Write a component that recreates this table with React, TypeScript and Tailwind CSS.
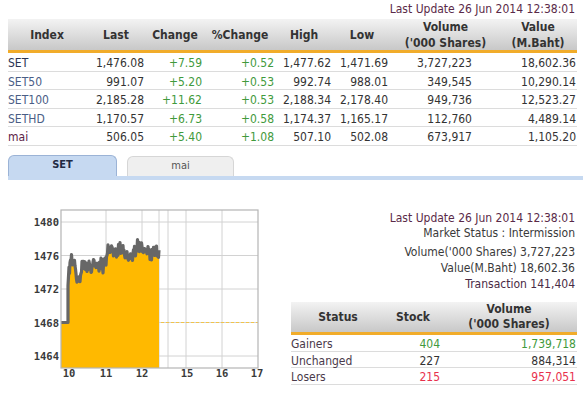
const indexRows = [
  { name: 'SET', tone: 'text-[#2b3352]', last: '1,476.08', chg: '+7.59', pct: '+0.52', high: '1,477.62', low: '1,471.69', vol: '3,727,223', val: '18,602.36' },
  { name: 'SET50', tone: 'text-[#4a5d86]', last: '991.07', chg: '+5.20', pct: '+0.53', high: '992.74', low: '988.01', vol: '349,545', val: '10,290.14' },
  { name: 'SET100', tone: 'text-[#4a5d86]', last: '2,185.28', chg: '+11.62', pct: '+0.53', high: '2,188.34', low: '2,178.40', vol: '949,736', val: '12,523.27' },
  { name: 'SETHD', tone: 'text-[#4a5d86]', last: '1,170.57', chg: '+6.73', pct: '+0.58', high: '1,174.37', low: '1,165.17', vol: '112,760', val: '4,489.14' },
  { name: 'mai', tone: 'text-[#5c2446]', last: '506.05', chg: '+5.40', pct: '+1.08', high: '507.10', low: '502.08', vol: '673,917', val: '1,105.20' },
];

const statusRows = [
  { name: 'Gainers', tone: 'text-[#3f9a3c]', stock: '404', vol: '1,739,718' },
  { name: 'Unchanged', tone: 'text-[#333333]', stock: '227', vol: '884,314' },
  { name: 'Losers', tone: 'text-[#e8304c]', stock: '215', vol: '957,051' },
];

// rough shape of the morning session, [x, index level]
const keys: [number, number][] = [
  [68, 1472.4], [69, 1474.6], [71, 1475.4], [74, 1475.1], [77, 1473.2], [78, 1472.9],
  [80, 1473.6], [82, 1474.6], [84, 1475.0], [86, 1474.2], [88, 1475.0], [91, 1474.5],
  [94, 1475.3], [97, 1474.4], [100, 1475.0], [103, 1474.8], [106, 1475.6], [108, 1476.5],
  [112, 1476.8], [116, 1476.3], [120, 1476.8], [124, 1476.5], [127, 1476.2], [130, 1475.5],
  [133, 1476.0], [136, 1476.8], [139, 1477.5], [142, 1476.8], [145, 1476.3], [148, 1476.8],
  [151, 1476.0], [154, 1476.6], [157, 1476.2], [159, 1476.4],
];

const yOf = (v: number) => 222 + (1480 - v) * 8.375;

function levelAt(x: number) {
  for (let i = 0; i < keys.length - 1; i++) {
    const [x0, v0] = keys[i];
    const [x1, v1] = keys[i + 1];
    if (x >= x0 && x <= x1) {
      const t = (x - x0) / (x1 - x0 || 1);
      return v0 + (v1 - v0) * t;
    }
  }
  return keys[keys.length - 1][1];
}

function buildSeries() {
  const pts: [number, number][] = [[61, yOf(1468)], [68, yOf(1468)]];
  for (let x = 68; x <= 159; x += 0.5) {
    const noise =
      0.35 * Math.sin(x * 1.7) + 0.3 * Math.sin(x * 4.3 + 1) + 0.25 * Math.sin(x * 7.9 + 2) + 0.15 * Math.sin(x * 13.1);
    pts.push([x, yOf(levelAt(x) + (x > 69 ? noise : 0))]);
  }
  return pts;
}

function IntradayChart() {
  const pts = buildSeries();
  const line = pts.map(([x, y], i) => `${i ? 'L' : 'M'}${x} ${y.toFixed(1)}`).join(' ');
  const area = `${line} L159 368 L61 368 Z`;
  const hLines = [222, 255.5, 289, 322.5, 356];
  const vLines = [106, 142, 159, 168, 186, 222];
  const yLabels = ['1480', '1476', '1472', '1468', '1464'];
  const xLabels: [number, string][] = [[69, '10'], [106, '11'], [142, '12'], [187, '15'], [222, '16'], [257, '17']];

  return (
    <svg width="283" height="200" viewBox="0 180 283 200" className="block shrink-0">
      <rect x="61" y="210" width="197" height="158" fill="#fff" />
      {hLines.map((y) => (
        <line key={y} x1="61" x2="258" y1={y} y2={y} stroke="#d2d2d2" strokeWidth="1" />
      ))}
      {vLines.map((x) => (
        <line key={x} x1={x} x2={x} y1="210" y2="368" stroke="#d2d2d2" strokeWidth="1" />
      ))}
      <line x1="161" x2="258" y1="322.5" y2="322.5" stroke="#f2c44a" strokeWidth="1.2" strokeDasharray="3 2" />
      <path d={area} fill="#ffb900" />
      <path d={line} fill="none" stroke="#676767" strokeWidth="3.2" strokeLinejoin="round" />
      <rect x="61" y="210" width="197" height="158" fill="none" stroke="#b4b4b4" strokeWidth="1.2" />
      {yLabels.map((t, i) => (
        <text key={t} x="59" y={hLines[i] + 4} textAnchor="end" fontSize="10.5" fontWeight="bold" fill="#3a3a3a" fontFamily="DejaVu Sans Mono, monospace">
          {t}
        </text>
      ))}
      {xLabels.map(([x, t]) => (
        <text key={t} x={x} y="377" textAnchor="middle" fontSize="10.5" fontWeight="bold" fill="#3a3a3a" fontFamily="DejaVu Sans Mono, monospace">
          {t}
        </text>
      ))}
    </svg>
  );
}

const topCols = 'grid grid-cols-[78px_60px_58px_72px_57px_57px_84px_102px]';
const topHead = 'grid grid-cols-[78px_60px_58px_72px_56px_60px_107px_78px]';

export default function App() {
  return (
    <div className="w-[583px] h-[420px] overflow-hidden bg-white text-[12px] text-[#333] font-['DejaVu_Sans_Condensed',_'Liberation_Sans',_sans-serif]">
      <div className="h-[19px] pr-[8px] text-right leading-[18px] text-[#5a2a48]">
        Last Update 26 Jun 2014 12:38:01
      </div>

      <div className="ml-[8px] w-[569px]">
        <div className={`${topHead} h-[34px] items-center border-b-[3px] border-[#f1ac2a] bg-gradient-to-b from-[#f3f3f3] to-[#c8c8c8] font-bold leading-[16px] text-center text-[#333]`}>
          <div>Index</div>
          <div>Last</div>
          <div>Change</div>
          <div>%Change</div>
          <div>High</div>
          <div>Low</div>
          <div>Volume<br />('000 Shares)</div>
          <div>Value<br />(M.Baht)</div>
        </div>
        {indexRows.map((r) => (
          <div key={r.name} className={`${topCols} h-[18.5px] items-center border-b border-[#dcdcdc] pt-[1px] pr-[1px] text-right`}>
            <div className={`text-left ${r.tone}`}>{r.name}</div>
            <div className="pr-[2px]">{r.last}</div>
            <div className="pr-[2px] text-[#3f9a3c]">{r.chg}</div>
            <div className="pr-[2px] text-[#3f9a3c]">{r.pct}</div>
            <div className="pr-[2px]">{r.high}</div>
            <div className="pr-[2px]">{r.low}</div>
            <div className="pr-[2px]">{r.vol}</div>
            <div>{r.val}</div>
          </div>
        ))}
      </div>

      <div className="mt-[9px] flex items-end gap-[10px] pl-[8px]">
        <div className="flex h-[21px] w-[109px] items-center justify-center rounded-t-[6px] border border-b-0 border-[#9bb3d6] bg-[#c6d9f1] text-[11px] font-bold text-[#1f2a44]">
          SET
        </div>
        <div className="flex h-[20px] w-[107px] items-center justify-center rounded-t-[6px] border border-b-0 border-[#d6d6d6] bg-[#efefef] text-[11px] text-[#555]">
          mai
        </div>
      </div>
      <div className="ml-[8px] h-[4px] bg-[#c6d9f1]" />

      <div className="flex">
        <IntradayChart />
        <div className="flex-1">
          <div className="pt-[31px] pr-[8px] text-right">
            <div className="h-[15px] leading-[15px] text-[#5a2a48]">Last Update 26 Jun 2014 12:38:01</div>
            <div className="h-[15px] leading-[15px] text-[#3a3a3a]">Market Status : Intermission</div>
            <div className="mt-[4px] h-[15.5px] leading-[15px] text-[#3a3a3a]">Volume('000 Shares) 3,727,223</div>
            <div className="h-[17px] leading-[17px] text-[#3a3a3a]">Value(M.Baht) 18,602.36</div>
            <div className="h-[14px] leading-[14px] text-[#4a2c45]">Transaction 141,404</div>
          </div>

          <div className="mt-[11px] ml-[8px] mr-[6px]">
            <div className="grid h-[33px] grid-cols-[94px_56px_1fr] items-center border-b-[3px] border-[#f1ac2a] bg-gradient-to-b from-[#f3f3f3] to-[#c8c8c8] text-center font-bold leading-[15px]">
              <div>Status</div>
              <div>Stock</div>
              <div>Volume<br />('000 Shares)</div>
            </div>
            {statusRows.map((r) => (
              <div key={r.name} className={`grid h-[16.7px] grid-cols-[94px_56px_1fr] items-center border-b border-[#dcdcdc] text-right ${r.tone}`}>
                <div className="text-left text-[#4a3a4a]">{r.name}</div>
                <div className="pr-[1px]">{r.stock}</div>
                <div className="pr-[1px]">{r.vol}</div>
              </div>
            ))}
          </div>
        </div>
      </div>
    </div>
  );
}
